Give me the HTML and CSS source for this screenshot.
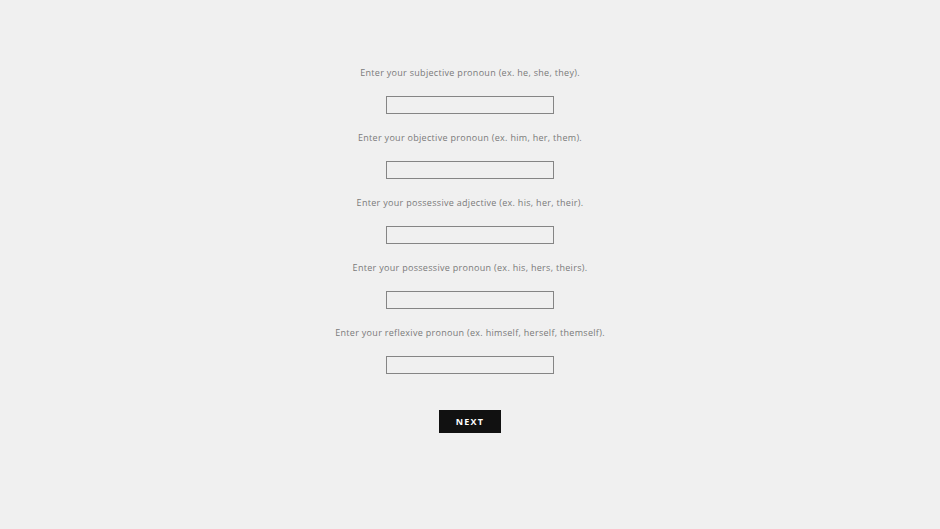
FILE: index.html
```html
<!DOCTYPE html>
<html>
<head>
<meta charset="utf-8">
<link rel="stylesheet" href="styles.css">
</head>
<body>
<form class="form">
  <div class="field">
    <label class="label">Enter your subjective pronoun (ex. he, she, they).</label>
    <input class="input" type="text">
  </div>
  <div class="field">
    <label class="label">Enter your objective pronoun (ex. him, her, them).</label>
    <input class="input" type="text">
  </div>
  <div class="field">
    <label class="label">Enter your possessive adjective (ex. his, her, their).</label>
    <input class="input" type="text">
  </div>
  <div class="field">
    <label class="label">Enter your possessive pronoun (ex. his, hers, theirs).</label>
    <input class="input" type="text">
  </div>
  <div class="field">
    <label class="label">Enter your reflexive pronoun (ex. himself, herself, themself).</label>
    <input class="input" type="text">
  </div>
  <button class="next" type="button">NEXT</button>
</form>
</body>
</html>
```
FILE: styles.css
```css
html, body {
  margin: 0;
  padding: 0;
  background: #f0f0f0;
  height: 100%;
}
body {
  font-family: "Open Sans", "DejaVu Sans", sans-serif;
}
.form {
  display: flex;
  flex-direction: column;
  align-items: center;
  padding-top: 66px;
}
.field {
  display: flex;
  flex-direction: column;
  align-items: center;
  height: 65px;
}
.label {
  font-size: 9px;
  line-height: 14px;
  height: 14px;
  letter-spacing: 0.3px;
  color: #7a7a7a;
  margin-bottom: 16px;
}
.input {
  box-sizing: border-box;
  width: 168px;
  height: 18px;
  margin: 0;
  padding: 0;
  border: 1px solid #858585;
  background: #f0f0f0;
  outline: none;
}
.next {
  margin-top: 19px;
  width: 62px;
  height: 23px;
  padding: 0 0 1px;
  border: none;
  background: #111;
  color: #fff;
  font-family: "Open Sans", sans-serif;
  font-weight: 700;
  font-size: 9px;
  letter-spacing: 1.2px;
}
```
